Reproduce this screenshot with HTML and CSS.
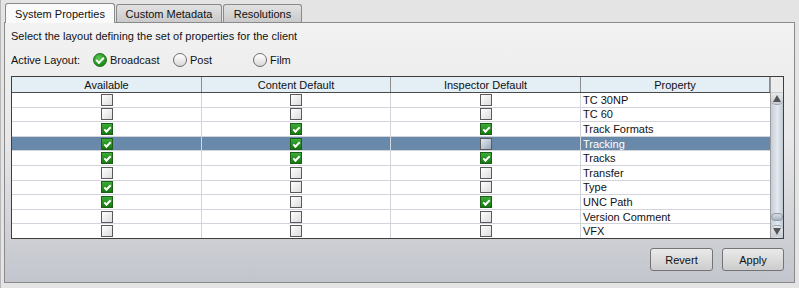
FILE: index.html
```html
<!DOCTYPE html>
<html lang="en">
<head>
    <meta charset="UTF-8" />
    <title>Client Properties</title>
    <link rel="stylesheet" href="styles.css">
</head>
<body>
    <div class="frame">
        <div class="tabs">
            <div class="tab active">System Properties</div>
            <div class="tab metadata">Custom Metadata</div>
            <div class="tab resolutions">Resolutions</div>
        </div>
        <div class="panel">
            <p class="hint">Select the layout defining the set of properties for the client</p>
            <div class="layout-row">
                <span class="layout-label">Active Layout:</span>
                <label class="radio checked">Broadcast</label>
                <label class="radio">Post</label>
                <label class="radio">Film</label>
            </div>

            <div class="table">
                <div class="grid">
                    <div class="row head">
                        <div>Available</div>
                        <div>Content Default</div>
                        <div>Inspector Default</div>
                        <div>Property</div>
                    </div>
                    <div class="row">
                        <div><span class="box"></span></div>
                        <div><span class="box"></span></div>
                        <div><span class="box"></span></div>
                        <div class="name">TC 30NP</div>
                    </div>
                    <div class="row">
                        <div><span class="box"></span></div>
                        <div><span class="box"></span></div>
                        <div><span class="box"></span></div>
                        <div class="name">TC 60</div>
                    </div>
                    <div class="row">
                        <div><span class="box on"></span></div>
                        <div><span class="box on"></span></div>
                        <div><span class="box on"></span></div>
                        <div class="name">Track Formats</div>
                    </div>
                    <div class="row selected">
                        <div><span class="box on"></span></div>
                        <div><span class="box on"></span></div>
                        <div><span class="box"></span></div>
                        <div class="name">Tracking</div>
                    </div>
                    <div class="row">
                        <div><span class="box on"></span></div>
                        <div><span class="box on"></span></div>
                        <div><span class="box on"></span></div>
                        <div class="name">Tracks</div>
                    </div>
                    <div class="row">
                        <div><span class="box"></span></div>
                        <div><span class="box"></span></div>
                        <div><span class="box"></span></div>
                        <div class="name">Transfer</div>
                    </div>
                    <div class="row">
                        <div><span class="box on"></span></div>
                        <div><span class="box"></span></div>
                        <div><span class="box"></span></div>
                        <div class="name">Type</div>
                    </div>
                    <div class="row">
                        <div><span class="box on"></span></div>
                        <div><span class="box"></span></div>
                        <div><span class="box on"></span></div>
                        <div class="name">UNC Path</div>
                    </div>
                    <div class="row">
                        <div><span class="box"></span></div>
                        <div><span class="box"></span></div>
                        <div><span class="box"></span></div>
                        <div class="name">Version Comment</div>
                    </div>
                    <div class="row">
                        <div><span class="box"></span></div>
                        <div><span class="box"></span></div>
                        <div><span class="box"></span></div>
                        <div class="name">VFX</div>
                    </div>
                </div>
                <div class="vscroll">
                    <div class="corner"></div>
                    <div class="track">
                        <span class="arrow up"></span>
                        <span class="thumb"></span>
                        <span class="arrow down"></span>
                    </div>
                </div>
            </div>

            <div class="actions">
                <button class="revert">Revert</button>
                <button>Apply</button>
            </div>
        </div>
    </div>
</body>
</html>
```

FILE: styles.css
```css
* {
    box-sizing: border-box;
}
body {
    margin: 0;
    width: 799px;
    height: 288px;
    overflow: hidden;
    background: #e4e4e4;
    font-family: "Liberation Sans", Arial, sans-serif;
    font-size: 11px;
    color: #111;
}
.frame {
    padding: 2px 4px 0 3px;
    border-left: 1px solid #b8b8b8;
    height: 288px;
}
.tabs {
    display: flex;
    align-items: flex-end;
    height: 20px;
    padding-left: 1px;
}
.tab {
    width: 106px;
    height: 18px;
    text-align: center;
    line-height: 18px;
    border: 1px solid #8a8a8a;
    border-bottom: none;
    border-radius: 3px 3px 0 0;
    background: linear-gradient(#e2e2e2, #cacaca);
    margin-right: 1px;
}
.tab.active {
    width: 110px;
    height: 20px;
    line-height: 20px;
    background: #fafafa;
    position: relative;
    top: 1px;
}
.tab.resolutions {
    width: 79px;
}
.panel {
    height: 261px;
    border: 1px solid #8a8a8a;
    background: linear-gradient(#f2f2f2, #e8e8ea 45%, #c2c5cc);
    padding: 4px 10px 0 6px;
}
.hint {
    margin: 0;
    height: 19px;
    line-height: 19px;
}
.layout-row {
    display: flex;
    align-items: center;
    height: 30px;
    padding-bottom: 3px;
}
.layout-label {
    flex: none;
    width: 82px;
}
.radio {
    flex: none;
    display: flex;
    align-items: center;
    width: 80px;
}
.radio::before {
    content: "";
    width: 12px;
    height: 12px;
    margin-right: 3px;
    border: 1px solid #6c6c6c;
    border-radius: 50%;
    background: linear-gradient(#ffffff, #d8d8d8);
}
.radio.checked {
    position: relative;
}
.radio.checked::before {
    border-color: #23701f;
    background: radial-gradient(circle at 40% 35%, #5ccb54, #1f8a1b 70%);
}
.radio.checked::after {
    content: "";
    position: absolute;
    left: 3px;
    top: 4px;
    width: 6px;
    height: 3px;
    border-left: 2px solid #fff;
    border-bottom: 2px solid #fff;
    transform: rotate(-45deg);
}

.table {
    display: flex;
    height: 163px;
    border: 1px solid #3e3e3e;
    background: #fff;
    overflow: hidden;
}
.grid {
    width: 758px;
}
.row {
    display: grid;
    grid-template-columns: 190px 189px 190px 189px;
    height: 14.6px;
    border-bottom: 1px solid #d3d3db;
}
.row > div {
    display: flex;
    align-items: center;
    justify-content: center;
    border-right: 1px solid #d3d3db;
    overflow: hidden;
    white-space: nowrap;
}
.row > div:last-child {
    border-right: none;
}
.row .name {
    justify-content: flex-start;
    padding-left: 2px;
}
.row.head {
    height: 16px;
    background: #e3eef5;
    border-bottom: 1px solid #4a4a4a;
}
.row.head > div,
.row.head > div:last-child {
    border-right: 1px solid #8c8c8c;
}
.row.selected {
    background: #6889a9;
    color: #fff;
}
.box {
    position: relative;
    width: 12px;
    height: 12px;
    border: 1px solid #5a5a5a;
    background: linear-gradient(135deg, #ffffff, #dcdcdc);
}
.row.selected .box {
    background: linear-gradient(135deg, #e4eaf0, #9aaabb);
}
.box.on,
.row.selected .box.on {
    border-color: #1d5e1a;
    background: linear-gradient(#3cab37, #16780f);
}
.box.on::after {
    content: "";
    position: absolute;
    left: 2px;
    top: 3px;
    width: 5px;
    height: 2px;
    border-left: 2px solid #fff;
    border-bottom: 2px solid #fff;
    transform: rotate(-45deg);
}

.vscroll {
    flex: 1;
    display: flex;
    flex-direction: column;
    border-left: 1px solid #9a9a9a;
}
.corner {
    height: 16px;
    background: #ececec;
    border-bottom: 1px solid #c8c8c8;
}
.track {
    flex: 1;
    display: flex;
    flex-direction: column;
    justify-content: space-between;
    align-items: center;
    background: linear-gradient(90deg, #c6ced8, #e4e8ee 55%, #c0c8d2);
    padding-bottom: 1px;
}
.arrow {
    width: 12px;
    height: 12px;
    background: linear-gradient(#e6e8ec, #c8ccd4);
    display: flex;
    justify-content: center;
    align-items: center;
}
.arrow.up {
    border-radius: 0 0 5px 5px;
    border-bottom: 1px solid #9aa4b0;
}
.arrow.down {
    border-radius: 5px 5px 0 0;
    border-top: 1px solid #9aa4b0;
}
.arrow::after {
    content: "";
    border-left: 4px solid transparent;
    border-right: 4px solid transparent;
}
.arrow.up::after {
    border-bottom: 7px solid #555;
}
.arrow.down::after {
    border-top: 7px solid #555;
}
.thumb {
    margin-top: auto;
    width: 12px;
    height: 8px;
    border-radius: 5px;
    background: linear-gradient(#d8dde4, #a8b2bf);
    border: 1px solid #8e98a5;
    margin-bottom: 4px;
}

.actions {
    display: flex;
    justify-content: flex-end;
    gap: 9px;
    margin-top: 9px;
}
button {
    height: 23px;
    width: 62px;
    font-family: inherit;
    font-size: 11px;
    color: #111;
    border: 1px solid #747474;
    border-radius: 3px;
    background: linear-gradient(#eaeaea, #cdcdcd);
}
button.revert {
    width: 63px;
}
```
